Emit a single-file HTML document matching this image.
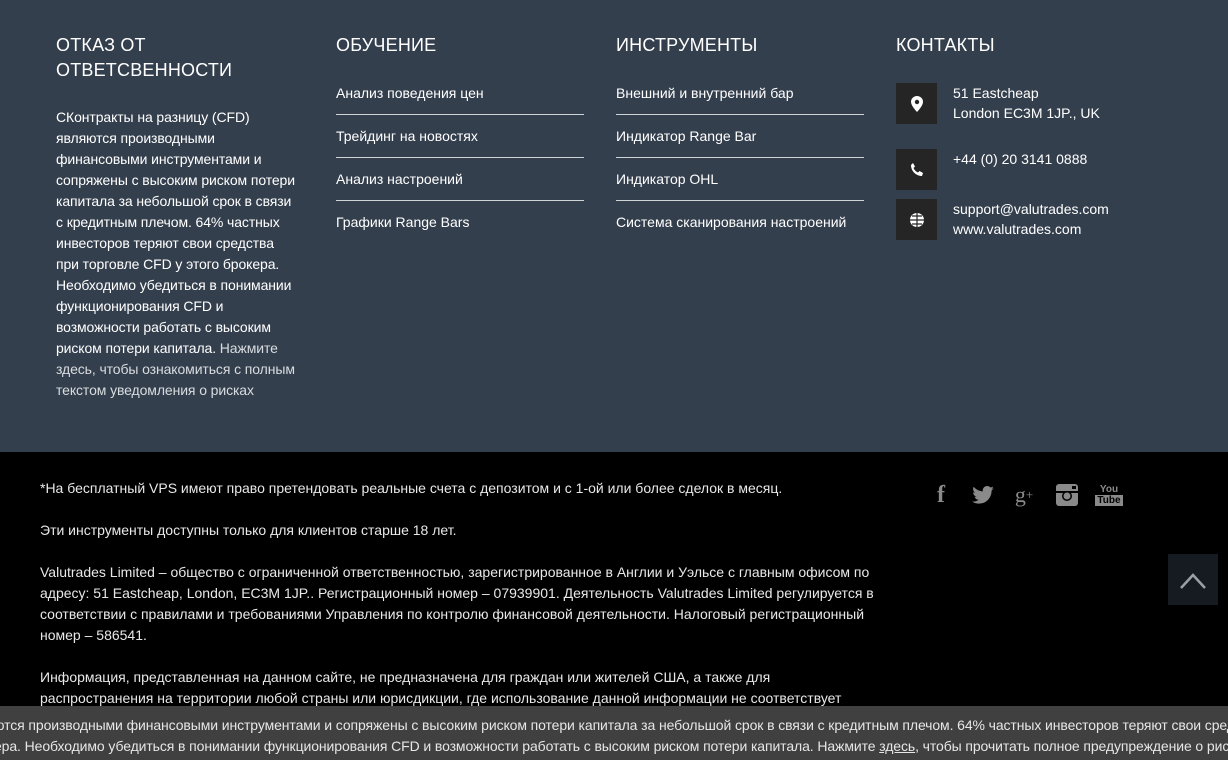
<!DOCTYPE html>
<html><head><meta charset="utf-8"><style>
*{margin:0;padding:0;box-sizing:border-box}
body{width:1228px;height:760px;overflow:hidden;background:#000;font-family:"Liberation Sans",Arial,sans-serif;color:#fff;position:relative}
.top{position:absolute;left:0;top:0;width:1228px;height:452px;background:#343f4d}
.col{position:absolute;top:33px}
h3{font-size:18px;font-weight:normal;line-height:25px;letter-spacing:0.2px}
.p{font-size:14px;line-height:21px;margin-top:24px;width:243px;letter-spacing:-0.1px}
.p span{color:#d8dce0}
ul{list-style:none;margin-top:14px;width:248px}
li{font-size:14px;padding:11px 0 10px;line-height:21px;border-bottom:1px solid #cfd3d8;white-space:nowrap}
li:last-child{border:none}
.ct{position:absolute;left:896px;font-size:14px;line-height:20px}
.ic{position:absolute;left:0;width:41px;height:41px;background:#252525;display:flex;align-items:center;justify-content:center}
.ct .t{position:absolute;left:57px;white-space:nowrap}
.bot{position:absolute;left:40px;top:478px;width:840px;font-size:14px;line-height:21px;color:#e8e8e8}
.bot p{margin-bottom:21px}
.soc{position:absolute;top:483px;display:flex;align-items:center;justify-content:center;width:26px;height:24px;color:#8a8a8a}
.up{position:absolute;left:1168px;top:554px;width:50px;height:51px;background-color:#151b20}
.bar{position:absolute;left:0;top:706px;width:1228px;height:54px;background:#404040;color:#e6e6e6;font-size:14px;line-height:21px;padding-top:9px;white-space:nowrap;overflow:hidden}
.bar div{margin-left:-6px;letter-spacing:-0.1px}
</style></head><body>
<div class="top">
 <div class="col" style="left:56px">
  <h3>ОТКАЗ ОТ<br>ОТВЕТСВЕННОСТИ</h3>
  <div class="p">СКонтракты на разницу (CFD) являются производными финансовыми инструментами и сопряжены с высоким риском потери капитала за небольшой срок в связи с кредитным плечом. 64% частных инвесторов теряют свои средства при торговле CFD у этого брокера. Необходимо убедиться в понимании функционирования CFD и возможности работать с высоким риском потери капитала. <span>Нажмите здесь, чтобы ознакомиться с полным текстом уведомления о рисках</span></div>
 </div>
 <div class="col" style="left:336px">
  <h3>ОБУЧЕНИЕ</h3>
  <ul><li>Анализ поведения цен</li><li>Трейдинг на новостях</li><li>Анализ настроений</li><li>Графики Range Bars</li></ul>
 </div>
 <div class="col" style="left:616px">
  <h3>ИНСТРУМЕНТЫ</h3>
  <ul><li>Внешний и внутренний бар</li><li>Индикатор Range Bar</li><li>Индикатор OHL</li><li>Система сканирования настроений</li></ul>
 </div>
 <div class="col" style="left:896px"><h3>КОНТАКТЫ</h3></div>
 <div class="ct" style="top:83px">
  <div class="ic" style="top:0"><svg width="12" height="16" viewBox="0 0 12 16"><path d="M6 0C2.7 0 0 2.6 0 5.8 0 10 6 16 6 16s6-6 6-10.2C12 2.6 9.3 0 6 0z" fill="#fff"/><circle cx="6" cy="6" r="2.2" fill="#252525"/></svg></div>
  <div class="t" style="top:0">51 Eastcheap<br>London EC3M 1JP., UK</div>
  <div class="ic" style="top:66px"><svg width="14" height="14" viewBox="0 0 14 14"><path d="M3 0l2 3.5-1.5 1.5c.8 2 2.5 3.7 4.5 4.5L9.5 8 13 10l-1 3c-6 0-11-5-11-11z" fill="#fff"/></svg></div>
  <div class="t" style="top:66px">+44 (0) 20 3141 0888</div>
  <div class="ic" style="top:116px"><svg width="16" height="16" viewBox="0 0 16 16"><circle cx="8" cy="8" r="7" fill="#fff"/><path d="M1 8h14M8 1v14M3 4h10M3 12h10" stroke="#252525" stroke-width="1.2"/></svg></div>
  <div class="t" style="top:116px">support@valutrades.com<br>www.valutrades.com</div>
 </div>
</div>
<div class="bot">
 <p>*На бесплатный VPS имеют право претендовать реальные счета с депозитом и с 1-ой или более сделок в месяц.</p>
 <p>Эти инструменты доступны только для клиентов старше 18 лет.</p>
 <p>Valutrades Limited – общество с ограниченной ответственностью, зарегистрированное в Англии и Уэльсе с главным офисом по адресу: 51 Eastcheap, London, EC3M 1JP.. Регистрационный номер – 07939901. Деятельность Valutrades Limited регулируется в соответствии с правилами и требованиями Управления по контролю финансовой деятельности. Налоговый регистрационный номер – 586541.</p>
 <p>Информация, представленная на данном сайте, не предназначена для граждан или жителей США, а также для распространения на территории любой страны или юрисдикции, где использование данной информации не соответствует</p>
</div>
<div class="soc" style="left:928px;font:bold 24px 'Liberation Serif',serif">f</div>
<div class="soc" style="left:970px"><svg width="22" height="18" viewBox="0 0 24 20"><path d="M24 2.4c-.9.4-1.8.7-2.8.8 1-.6 1.8-1.6 2.2-2.7-1 .6-2 1-3.1 1.2C19.3.7 18 0 16.6 0c-2.7 0-4.9 2.2-4.9 4.9 0 .4 0 .8.1 1.1C7.7 5.8 4.1 3.9 1.7.9c-.4.7-.7 1.600-.7 2.5 0 1.7.9 3.2 2.2 4.1-.8 0-1.6-.2-2.2-.6v.1c0 2.4 1.7 4.4 3.9 4.8-.4.1-.8.2-1.3.2-.3 0-.6 0-.9-.1.6 2 2.4 3.4 4.600 3.4-1.7 1.3-3.8 2.1-6.1 2.1H0c2.2 1.4 4.8 2.2 7.5 2.2 9.1 0 14-7.5 14-14v-.6c1-.7 1.8-1.6 2.5-2.6z" fill="#8a8a8a"/></svg></div>
<div class="soc" style="left:1011px;font:22px 'Liberation Serif',serif">g<sup style="font-size:13px">+</sup></div>
<div class="soc" style="left:1054px"><svg width="22" height="22" viewBox="0 0 22 22"><rect x="0" y="0" width="22" height="22" rx="3" fill="#8a8a8a"/><rect x="0" y="7" width="22" height="2" fill="#000"/><circle cx="11" cy="12" r="5" fill="#000"/><circle cx="11" cy="12" r="3.5" fill="#8a8a8a"/><rect x="16" y="2" width="4" height="3" fill="#000"/></svg></div>
<div class="soc" style="left:1096px;flex-direction:column;font:bold 10px 'Liberation Sans',sans-serif;line-height:11px"><span>You</span><span style="background:#8a8a8a;color:#000;padding:0 2px">Tube</span></div>
<div class="up"><svg width="50" height="51" viewBox="0 0 50 51"><rect width="50" height="51" fill="#151b20"/><path d="M13 34L25 21 37 34" stroke="#9aa0a4" stroke-width="2.5" fill="none"/></svg></div>
<div class="bar"><div>ются производными финансовыми инструментами и сопряжены с высоким риском потери капитала за небольшой срок в связи с кредитным плечом. 64% частных инвесторов теряют свои средства</div><div>ера. Необходимо убедиться в понимании функционирования CFD и возможности работать с высоким риском потери капитала. Нажмите <u>здесь</u>, чтобы прочитать полное предупреждение о рисках</div></div>
</body></html>
